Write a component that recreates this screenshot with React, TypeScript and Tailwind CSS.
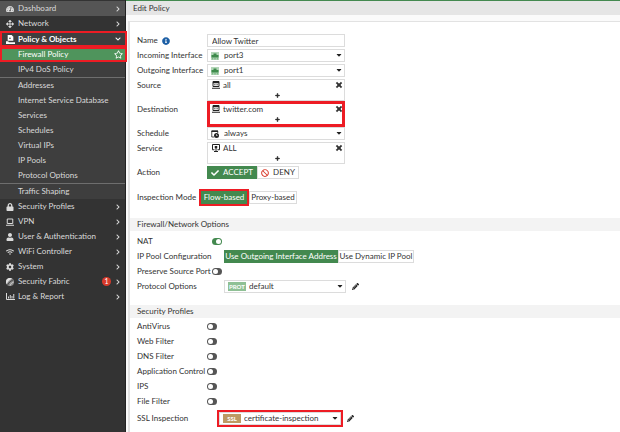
import type { ReactNode } from "react";
import {
    FaArrowsAlt,
    FaBan,
    FaCaretDown,
    FaCheck,
    FaChevronDown,
    FaChevronRight,
    FaCog,
    FaInfoCircle,
    FaLock,
    FaPencilAlt,
    FaPlus,
    FaRegStar,
    FaTachometerAlt,
    FaTimes,
    FaUser,
    FaWifi,
} from "react-icons/fa";

const PolicyIcon = () => (
    <svg viewBox="0 0 16 16" className="w-[9px] h-[9px]" fill="currentColor">
        <path d="M3 0h7l3 3v7H3z" />
        <path d="M0 11h4l1 2h11v3H0z" />
        <path d="M5.500 5h3v1.500h-3z" fill="#333" />
    </svg>
);

const LaptopIcon = () => (
    <svg viewBox="0 0 16 16" className="w-2 h-2" fill="none" stroke="currentColor" strokeWidth="2">
        <path d="M2.500 2h11v9h-11zM0 14.500h16" />
    </svg>
);

const FabricIcon = () => (
    <svg viewBox="0 0 16 16" className="w-2 h-2">
        <circle cx="8" cy="8" r="8" fill="#8a8a8a" />
        <path d="M1 12A8 8 0 0 1 12 1Q5 5 1 12z" fill="#e0e0e0" />
        <path d="M3 14Q6 7 14.500 3.500" fill="none" stroke="#333" strokeWidth="1.500" />
        <path d="M8 15.500Q9 10 15.500 8" fill="none" stroke="#ddd" strokeWidth="1.500" />
    </svg>
);

const ReportIcon = () => (
    <svg viewBox="0 0 18 14" className="w-[9px] h-[7px]" fill="none" stroke="currentColor" strokeWidth="2">
        <path d="M1 0v13h17" />
        <path d="M5 11V7M8.500 11V4M12 11V6M15.500 11V2" />
    </svg>
);

const PortIcon = () => (
    <svg viewBox="0 0 16 16" className="w-2 h-2">
        <path d="M0 0h16v16H0z" fill="#b3d6b8" />
        <path d="M1 11V6h4V3h6v3h4v5z" fill="#3d8a4b" />
        <path d="M3 11v4M6.500 11v4M9.500 11v4M13 11v4" stroke="#6cab76" strokeWidth="1.500" />
    </svg>
);

const AddressIcon = () => (
    <svg viewBox="0 0 16 16" className="w-2 h-2" fill="none" stroke="#222" strokeWidth="2">
        <path d="M2 1h12v10H2zM0 14.500h16" />
        <path d="M2 3h12" strokeWidth="3" />
        <path d="M4.500 7.500h2M7.500 7.500h1.500M10.500 7.500h1.500" />
    </svg>
);

const ScheduleIcon = () => (
    <svg viewBox="0 0 16 16" className="w-2 h-2" fill="none" stroke="#222" strokeWidth="1.600">
        <path d="M6 14H1.500V2h12v4" />
        <path d="M1 2.500h13" strokeWidth="3" />
        <circle cx="11" cy="11" r="5" fill="#222" stroke="none" />
        <path d="M11 8.500V11h2" stroke="#fff" strokeWidth="1.400" />
    </svg>
);

const ServiceIcon = () => (
    <svg viewBox="0 0 16 16" className="w-2 h-2" fill="none" stroke="#222" strokeWidth="2">
        <path d="M5 11.500H1V1h14v10.500H11" />
        <path d="M8 8v6M4 15h8" />
        <path d="M5.500 4h5v4.500h-5z" fill="#222" stroke="none" />
    </svg>
);

interface NavItem {
    label: string;
    icon: ReactNode;
    badge?: number;
}

const topItems: NavItem[] = [
    { label: "Dashboard", icon: <FaTachometerAlt size={8} /> },
    { label: "Network", icon: <FaArrowsAlt size={8} /> },
];

const bottomItems: NavItem[] = [
    { label: "Security Profiles", icon: <FaLock size={8} /> },
    { label: "VPN", icon: <LaptopIcon /> },
    { label: "User & Authentication", icon: <FaUser size={8} /> },
    { label: "WiFi Controller", icon: <FaWifi size={8} /> },
    { label: "System", icon: <FaCog size={8} /> },
    { label: "Security Fabric", icon: <FabricIcon />, badge: 1 },
    { label: "Log & Report", icon: <ReportIcon /> },
];

const objectItems = [
    "Addresses",
    "Internet Service Database",
    "Services",
    "Schedules",
    "Virtual IPs",
    "IP Pools",
    "Protocol Options",
];

const profiles = ["AntiVirus", "Web Filter", "DNS Filter", "Application Control", "IPS", "File Filter"];

function NavLink({ item, active }: { item: NavItem; active?: boolean }) {
    return (
        <a href="#" className={`flex items-center h-[15px] pl-1.5 pr-1 ${active ? "bg-[#555555]" : ""}`}>
            <span className="w-3 flex items-center">{item.icon}</span>
            <span className="flex-1">{item.label}</span>
            {item.badge && (
                <span className="w-[9px] h-[9px] mr-1 rounded-full bg-[#d83a2b] text-white text-[7px] leading-[9px] text-center">
                    {item.badge}
                </span>
            )}
            <FaChevronRight size={6} />
        </a>
    );
}

function SubLink({ label }: { label: string }) {
    return (
        <a href="#" className="flex items-center h-[15px] pl-[18px]">
            {label}
        </a>
    );
}

function Sidebar() {
    return (
        <nav className="relative z-10 w-[126px] shrink-0 pt-px bg-[#333333] text-[#dadada] border-r border-[#222222]">
            {topItems.map((item, index) => (
                <NavLink key={item.label} item={item} active={index === 0} />
            ))}
            <div className="bg-[#3e3e3e]">
                <a
                    href="#"
                    className="relative flex items-center h-4 pl-1.5 pr-1 font-bold text-white after:absolute after:top-0 after:bottom-0 after:left-0 after:-right-0.5 after:border-2 after:border-[#ed1c24]"
                >
                    <span className="w-3 flex items-center">
                        <PolicyIcon />
                    </span>
                    <span className="flex-1">Policy &amp; Objects</span>
                    <FaChevronDown size={6} />
                </a>
                <a
                    href="#"
                    className="relative flex items-center h-[15px] pl-[18px] pr-0.5 bg-[#4f945c] text-white after:absolute after:top-0 after:bottom-0 after:left-0 after:-right-0.5 after:border-2 after:border-[#ed1c24]"
                >
                    <span className="flex-1">Firewall Policy</span>
                    <FaRegStar size={9} />
                </a>
                <SubLink label="IPv4 DoS Policy" />
                <div className="border-y border-[#6e6e6e]">
                    {objectItems.map((label) => (
                        <SubLink key={label} label={label} />
                    ))}
                </div>
                <SubLink label="Traffic Shaping" />
            </div>
            {bottomItems.map((item) => (
                <NavLink key={item.label} item={item} />
            ))}
        </nav>
    );
}

function Row({ label, id, wide, children }: { label: ReactNode; id?: string; wide?: string; children: ReactNode }) {
    return (
        <div className="flex items-start">
            <label htmlFor={id} className={`${wide ?? "w-[70px]"} shrink-0 leading-[13px] whitespace-nowrap`}>
                {label}
            </label>
            {children}
        </div>
    );
}

interface SelectProps {
    id: string;
    value: string;
    icon: ReactNode;
    width?: string;
    pad?: string;
}

function Select({ id, value, icon, width = "w-[138px]", pad = "pl-4" }: SelectProps) {
    return (
        <div className={`relative h-[13px] ${width}`}>
            <select
                id={id}
                className={`block w-full h-full appearance-none border border-[#dcdcdc] bg-white leading-[11px] ${pad}`}
            >
                <option>{value}</option>
            </select>
            <span className="absolute inset-y-0 left-1 flex items-center pointer-events-none">{icon}</span>
            <FaCaretDown size={8} className="absolute top-0.5 right-0.5 text-[#222222] pointer-events-none" />
        </div>
    );
}

function EntryBox({ value, icon, marked }: { value: string; icon: ReactNode; marked?: boolean }) {
    return (
        <div
            className={`relative w-[138px] h-[22px] pl-1 pr-px border border-[#dcdcdc] ${
                marked ? "after:absolute after:-inset-x-px after:-inset-y-[3px] after:border-3 after:border-[#ed1c24] after:pointer-events-none" : ""
            }`}
        >
            <div className="flex items-center h-2.5">
                {icon}
                <span className="flex-1 pl-[3px]">{value}</span>
                <button type="button" aria-label={`Remove ${value}`}>
                    <FaTimes size={8} strokeWidth={40} />
                </button>
            </div>
            <button type="button" aria-label="Add entry" className="flex items-center justify-center w-full h-2.5">
                <FaPlus size={5} strokeWidth={40} />
            </button>
        </div>
    );
}

function Toggle({ id, on }: { id: string; on?: boolean }) {
    return (
        <span className="flex items-center h-[13px]">
            <input
                id={id}
                type="checkbox"
                defaultChecked={on}
                className="appearance-none flex items-center w-2.5 h-[7px] p-px rounded-full bg-[#555555] checked:bg-[#43894f] checked:justify-end before:w-[5px] before:h-[5px] before:rounded-full before:bg-white"
            />
        </span>
    );
}

function SectionTitle({ children }: { children: ReactNode }) {
    return <h2 className="h-[13px] pl-[7px] leading-[13px] bg-[#f3f3f3]">{children}</h2>;
}

function EditButton({ label }: { label: string }) {
    return (
        <button type="button" aria-label={label} className="ml-1.5 flex items-center h-[13px] text-[#222222]">
            <FaPencilAlt size={7} />
        </button>
    );
}

const tag = "w-[18px] h-[9px] text-white text-[6px] font-bold leading-[9px] text-center";
const buttonOn = "flex items-center justify-center h-[13px] bg-[#43894f] text-white whitespace-nowrap";
const buttonOff = "flex items-center justify-center h-[13px] border border-[#dcdcdc] bg-white whitespace-nowrap";

export default function App() {
    return (
        <div className="flex min-h-screen bg-white font-['Lato',sans-serif] text-[8px] leading-[11px] text-[#333333]">
            <Sidebar />
            <main className="flex-1 flex flex-col border-t border-[#43894f]">
                <h1 className="h-3.5 pl-[7px] leading-[14px] bg-[#e5e5e5]">Edit Policy</h1>
                <div className="flex-1 pl-0.5 pt-1.5 bg-[#fafafa]">
                    <form className="h-full pt-3 border-t border-l-2 border-[#e2e2e2] bg-white">
                        <div className="flex flex-col gap-0.5 pl-[7px]">
                            <Row
                                id="name"
                                label={
                                    <span className="flex items-center gap-1">
                                        Name <FaInfoCircle size={8} className="text-[#1c5fa5]" />
                                    </span>
                                }
                            >
                                <input
                                    id="name"
                                    defaultValue="Allow Twitter"
                                    className="w-[138px] h-[13px] px-1 border border-[#dcdcdc]"
                                />
                            </Row>
                            <Row id="incoming" label="Incoming Interface">
                                <Select id="incoming" value="port3" icon={<PortIcon />} />
                            </Row>
                            <Row id="outgoing" label="Outgoing Interface">
                                <Select id="outgoing" value="port1" icon={<PortIcon />} />
                            </Row>
                            <Row label="Source">
                                <EntryBox value="all" icon={<AddressIcon />} />
                            </Row>
                            <Row label="Destination">
                                <EntryBox value="twitter.com" icon={<AddressIcon />} marked />
                            </Row>
                            <Row id="schedule" label="Schedule">
                                <Select id="schedule" value="always" icon={<ScheduleIcon />} />
                            </Row>
                            <Row label="Service">
                                <EntryBox value="ALL" icon={<ServiceIcon />} />
                            </Row>
                            <Row label="Action">
                                <button type="button" className={`${buttonOn} w-[50px] gap-1`}>
                                    <FaCheck size={8} /> ACCEPT
                                </button>
                                <button type="button" className={`${buttonOff} w-[42px] gap-1`}>
                                    <FaBan size={8} className="text-[#d83a2b]" /> DENY
                                </button>
                            </Row>
                        </div>

                        <div className="pt-3 pl-[7px]">
                            <Row label="Inspection Mode" wide="w-16">
                                <button type="button" className={`${buttonOn} w-[46px] outline-2 outline-[#ed1c24]`}>
                                    Flow-based
                                </button>
                                <button type="button" className={`${buttonOff} ml-0.5 w-12`}>
                                    Proxy-based
                                </button>
                            </Row>
                        </div>

                        <section className="pt-3.5">
                            <SectionTitle>Firewall/Network Options</SectionTitle>
                            <div className="flex flex-col gap-0.5 pl-[7px] pt-1">
                                <Row id="nat" label="NAT" wide="w-[75px]">
                                    <Toggle id="nat" on />
                                </Row>
                                <Row label="IP Pool Configuration" wide="w-[87px]">
                                    <button type="button" className={`${buttonOn} w-[114px]`}>
                                        Use Outgoing Interface Address
                                    </button>
                                    <button type="button" className={`${buttonOff} w-[76px]`}>
                                        Use Dynamic IP Pool
                                    </button>
                                </Row>
                                <Row id="preserve" label="Preserve Source Port" wide="w-[75px]">
                                    <Toggle id="preserve" />
                                </Row>
                                <Row id="protocol" label="Protocol Options" wide="w-[87px]">
                                    <Select
                                        id="protocol"
                                        value="default"
                                        width="w-[122px]"
                                        pad="pl-6"
                                        icon={<span className={`${tag} bg-[#8fc095]`}>PROT</span>}
                                    />
                                    <EditButton label="Edit protocol options" />
                                </Row>
                            </div>
                        </section>

                        <section className="pt-3">
                            <SectionTitle>Security Profiles</SectionTitle>
                            <div className="flex flex-col gap-0.5 pl-[7px] pt-0.5">
                                {profiles.map((profile) => (
                                    <Row key={profile} id={profile} label={profile} wide="w-[70px]">
                                        <Toggle id={profile} />
                                    </Row>
                                ))}
                            </div>
                            <div className="pl-[7px] pt-1">
                                <Row id="ssl" label="SSL Inspection" wide="w-[82px]">
                                    <div className="outline-2 outline-[#ed1c24]">
                                        <Select
                                            id="ssl"
                                            value="certificate-inspection"
                                            width="w-[122px]"
                                            pad="pl-6"
                                            icon={<span className={`${tag} bg-[#bd9a63]`}>SSL</span>}
                                        />
                                    </div>
                                    <EditButton label="Edit SSL inspection" />
                                </Row>
                            </div>
                        </section>
                    </form>
                </div>
            </main>
        </div>
    );
}
